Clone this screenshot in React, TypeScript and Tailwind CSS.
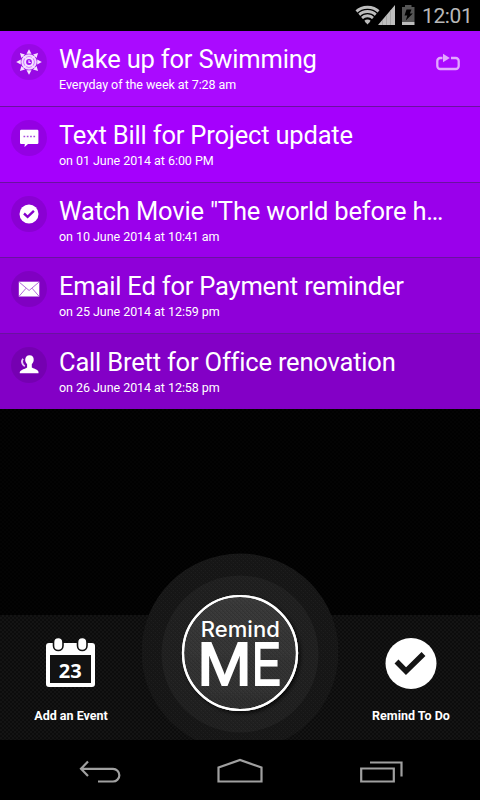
import type { ReactNode } from 'react';

const font = "font-['Roboto','Liberation_Sans',sans-serif]";

function SunIcon() {
  return (
    <svg width="36" height="36" viewBox="0 0 36 36" fill="#f6e4ff">
      {[0, 45, 90, 135, 180, 225, 270, 315].map((a) => (
        <path key={a} d="M15.500 9.800L18 5.200l2.500 4.600z" transform={`rotate(${a} 18 18)`} />
      ))}
      <circle cx="18" cy="18" r="6.800" fill="#c668ff" stroke="#f0d6ff" strokeWidth="2" />
      <circle cx="18" cy="18" r="3.900" fill="#a010f0" stroke="#f6e4ff" strokeWidth="2" />
      <path d="M12.500 12.500l3 2M23.500 12.500l-3 2M12.500 23.500l3-2M23.500 23.500l-3-2" stroke="#f6e4ff" strokeWidth="1.500" />
      <path d="M18 16.200v2.300h1.800" fill="none" stroke="#f6e4ff" strokeWidth="1.200" />
    </svg>
  );
}

function ChatIcon() {
  return (
    <svg width="36" height="36" viewBox="0 0 36 36">
      <path d="M10.200 9.700h16a1.200 1.200 0 0 1 1.200 1.200v11.800a1.200 1.200 0 0 1-1.200 1.200H17l-3.500 3 .3-3h-3.600A1.200 1.200 0 0 1 9 22.700V10.900a1.200 1.200 0 0 1 1.200-1.200z" fill="#fff" />
      <path d="M12.500 16.500h12" stroke="#a64be0" strokeWidth="1.700" strokeDasharray="1.700 1.600" />
    </svg>
  );
}

function CheckIcon() {
  return (
    <svg width="36" height="36" viewBox="0 0 36 36">
      <circle cx="18" cy="18" r="9.500" fill="#fff" />
      <path d="M13 17.500l3.600 3.300 6.300-6" fill="none" stroke="#8500cc" strokeWidth="2.400" />
    </svg>
  );
}

function MailIcon() {
  return (
    <svg width="36" height="36" viewBox="0 0 36 36">
      <rect x="7.800" y="10.700" width="20.500" height="14.800" fill="#fff" />
      <path d="M8.300 11.200l9.800 8.300 9.800-8.300M8.300 25l6.800-7.800M27.800 25l-6.800-7.800" fill="none" stroke="#b365dd" strokeWidth="1" />
    </svg>
  );
}

function CallIcon() {
  return (
    <svg width="36" height="36" viewBox="0 0 36 36">
      <path
        d="M18.500 8.200c2.800 0 4.400 1.900 4.200 4.800-.1 1.600-.8 3.200-1.900 4.200v3.200c1.200 1 5.600 1.300 6.700 4.400v1.500H8.800v-1.200c.9-2.800 5.500-3.200 7.300-4.700v-3.200c-1.100-1-1.900-2.600-1.900-4.200 0-2.900 1.700-4.800 4.300-4.800z"
        fill="#fff"
      />
      <path d="M12 11.700c-1.800 2.500-1 6 1.800 7.600" fill="none" stroke="#e6c8f5" strokeWidth="1.900" />
    </svg>
  );
}

function RepeatIcon() {
  return (
    <svg width="26" height="18" viewBox="0 0 26 18" fill="none" stroke="#e2a8ff" strokeWidth="2.300">
      <path d="M7.500 5H5.300a3 3 0 0 0-3 3v5a3 3 0 0 0 3 3h15.400a3 3 0 0 0 3-3V8a3 3 0 0 0-3-3H16" />
      <path d="M8 .8L14.800 5 8 9.200z" fill="#e2a8ff" stroke="none" />
    </svg>
  );
}

type RowProps = {
  icon: ReactNode;
  title: string;
  when: string;
  tone: string;
  trailing?: ReactNode;
};

const reminders: RowProps[] = [
  { icon: <SunIcon />, title: 'Wake up for Swimming', when: 'Everyday of the week at 7:28 am', tone: 'h-[76px] bg-[#aa0aff]', trailing: <RepeatIcon /> },
  { icon: <ChatIcon />, title: 'Text Bill for Project update', when: 'on 01 June 2014 at 6:00 PM', tone: 'h-[76px] bg-[#a500fd]' },
  { icon: <CheckIcon />, title: 'Watch Movie "The world before h…', when: 'on 10 June 2014 at 10:41 am', tone: 'h-[75px] bg-[#9a00eb]' },
  { icon: <MailIcon />, title: 'Email Ed for Payment reminder', when: 'on 25 June 2014 at 12:59 pm', tone: 'h-[76px] bg-[#8f00d9]' },
  { icon: <CallIcon />, title: 'Call Brett for Office renovation', when: 'on 26 June 2014 at 12:58 pm', tone: 'h-[75px] bg-[#8300c6] border-b-0' },
];

function ReminderRow({ icon, title, when, tone, trailing }: RowProps) {
  return (
    <li className={`flex border-b border-[#6a12a0] pl-[10.5px] pr-[19px] ${tone}`}>
      <div className="mt-[13px] flex size-9 shrink-0 items-center justify-center rounded-full bg-black/10">{icon}</div>
      <div className="ml-[12.5px] grow pt-[12px] text-white">
        <h2 className="whitespace-nowrap text-[25.5px] leading-8 tracking-[-0.19px]">{title}</h2>
        <p className="mt-px whitespace-nowrap text-[12.5px] leading-[17px] tracking-[-0.05px]">{when}</p>
      </div>
      {trailing && <div className="mt-[22px] shrink-0">{trailing}</div>}
    </li>
  );
}

function StatusBar() {
  return (
    <header className="flex h-[31px] items-start justify-end bg-black pr-[8px]">
      <svg width="65" height="31" viewBox="355 0 65 31" className="mr-[2px]">
        <clipPath id="fan"><path d="M367.500 24.500L354 8.500Q367.500 1 381 8.500z" /></clipPath>
        <g clipPath="url(#fan)" fill="none" stroke="#bdbdbd" strokeWidth="3">
          <circle cx="367.500" cy="24" r="3" fill="#bdbdbd" />
          <circle cx="367.500" cy="24" r="8.200" />
          <circle cx="367.500" cy="24" r="12.400" />
          <circle cx="367.500" cy="24" r="16.800" />
        </g>
        <path d="M378 25L395 5v20z" fill="#bdbdbd" />
        <path d="M382.500 20v5M386.500 15v10M390.500 10v15" stroke="#999" strokeWidth=".7" />
        <path d="M402 7h3V5h6.500v2h3v15H402z" fill="#555" />
        <path d="M402 22h12.500v3H402z" fill="#bdbdbd" />
        <path d="M406.500 9.500h5l-1.700 4h3l-7 7 1.500-5h-2.800z" fill="#000" />
      </svg>
      <span className="w-[50px] whitespace-nowrap pt-[4px] text-right text-[21px] leading-6 tracking-[-0.4px] text-[#b8b8b8]">12:01</span>
    </header>
  );
}

function RemindMeButton() {
  return (
    <button className="absolute left-[142px] top-[553px] h-[187px] w-[196px] overflow-hidden" aria-label="Remind me">
      <svg width="196" height="187" viewBox="142 553 196 187">
        <defs>
          <pattern id="weave" width="4" height="4" patternUnits="userSpaceOnUse">
            <path d="M0 0h1v1H0zM2 2h1v1H2zM1 1h1v1H1zM3 3h1v1H3z" fill="#000" fillOpacity=".12" />
            <path d="M3 0h1v1H3zM1 2h1v1H1z" fill="#fff" fillOpacity=".03" />
          </pattern>
          <linearGradient id="disc" x1="0" y1="0" x2="0" y2="1">
            <stop offset="0" stopColor="#3a3a3a" />
            <stop offset="1" stopColor="#2e2e2e" />
          </linearGradient>
          <filter id="drop" x="-20%" y="-20%" width="140%" height="140%">
            <feDropShadow dx="2" dy="2" stdDeviation="2" floodColor="#000" floodOpacity=".8" />
          </filter>
        </defs>
        <circle cx="240" cy="652" r="98.500" fill="#171717" />
        <circle cx="240" cy="654" r="78.500" fill="#202020" />
        <circle cx="240" cy="653" r="57" fill="url(#disc)" stroke="#fff" strokeWidth="2.200" filter="url(#drop)" />
        <circle cx="240" cy="652" r="98.500" fill="url(#weave)" />
        <circle cx="240" cy="653" r="57" fill="none" stroke="#fff" strokeWidth="2.200" />
        <text x="200.800" y="637" fontSize="21.300" fontWeight="500" textLength="79" lengthAdjust="spacingAndGlyphs" fill="#fff" fontFamily="Inter, sans-serif">Remind</text>
        <g fill="#fff" stroke="#fff" strokeWidth="2" fontSize="61.500" fontFamily="Liberation Sans, sans-serif">
          <text x="197.200" y="684.600" textLength="54.500" lengthAdjust="spacingAndGlyphs">M</text>
          <text x="252.200" y="684.600" textLength="28.500" lengthAdjust="spacingAndGlyphs">E</text>
        </g>
      </svg>
    </button>
  );
}

function CalendarIcon() {
  return (
    <svg width="52" height="52" viewBox="45 637 52 52">
      <rect x="46" y="643" width="49" height="44" rx="3" fill="#fff" />
      <rect x="50" y="655" width="41" height="28" fill="#121212" />
      <rect x="53.500" y="637.500" width="9.500" height="13" rx="4.700" fill="#fff" stroke="#121212" strokeWidth="1.600" />
      <rect x="77.500" y="637.500" width="9.500" height="13" rx="4.700" fill="#fff" stroke="#121212" strokeWidth="1.600" />
      <text x="70.300" y="677.500" fontSize="20" fontWeight="700" textAnchor="middle" fill="#fff" fontFamily="Open Sans, sans-serif">23</text>
    </svg>
  );
}

function TodoIcon() {
  return (
    <svg width="52" height="52" viewBox="385 637 52 52">
      <circle cx="411" cy="663.500" r="25.500" fill="#fff" />
      <path d="M396.500 661.500l9.500 9.700 17.500-17.200" fill="none" stroke="#151515" strokeWidth="5.500" strokeLinejoin="miter" />
    </svg>
  );
}

export default function App() {
  return (
    <div className={`relative flex h-[800px] w-[480px] flex-col overflow-hidden bg-black ${font}`}>
      <StatusBar />
      <ul className="shrink-0 [font-variant-ligatures:none]">
        {reminders.map((r) => (
          <ReminderRow key={r.title} {...r} />
        ))}
      </ul>
      <div className="h-[206px] shrink-0 bg-[repeating-conic-gradient(#040404_0_25%,#010101_0_50%)] bg-[size:4px_4px]" />
      <section className="flex h-[125px] shrink-0 justify-between bg-[repeating-conic-gradient(#141414_0_25%,#0c0c0c_0_50%)] bg-[size:4px_4px] text-[12.5px] font-bold text-white">
        <div className="flex w-[142px] flex-col items-center pt-[22px]">
          <CalendarIcon />
          <span className="mt-[18px] leading-[18px]">Add an Event</span>
        </div>
        <div className="flex w-[138px] flex-col items-center pt-[22px]">
          <TodoIcon />
          <span className="mt-[18px] leading-[18px]">Remind To Do</span>
        </div>
      </section>
      <RemindMeButton />
      <nav className="h-[60px] shrink-0 bg-black">
        <svg width="480" height="60" viewBox="0 740 480 60" fill="none" stroke="#a0a0a0" strokeWidth="2.200">
          <path d="M98 781.500h15a6.300 6.300 0 0 0 0-12.700H81M88 761.500l-7 7.300 7 7.200" />
          <path d="M218.500 781.500V767.500L240 760l21.500 7.500v14z" />
          <path d="M361.200 768.500h32.600v13h-32.600zM370 762.500h31.500V776.500" />
        </svg>
      </nav>
    </div>
  );
}
